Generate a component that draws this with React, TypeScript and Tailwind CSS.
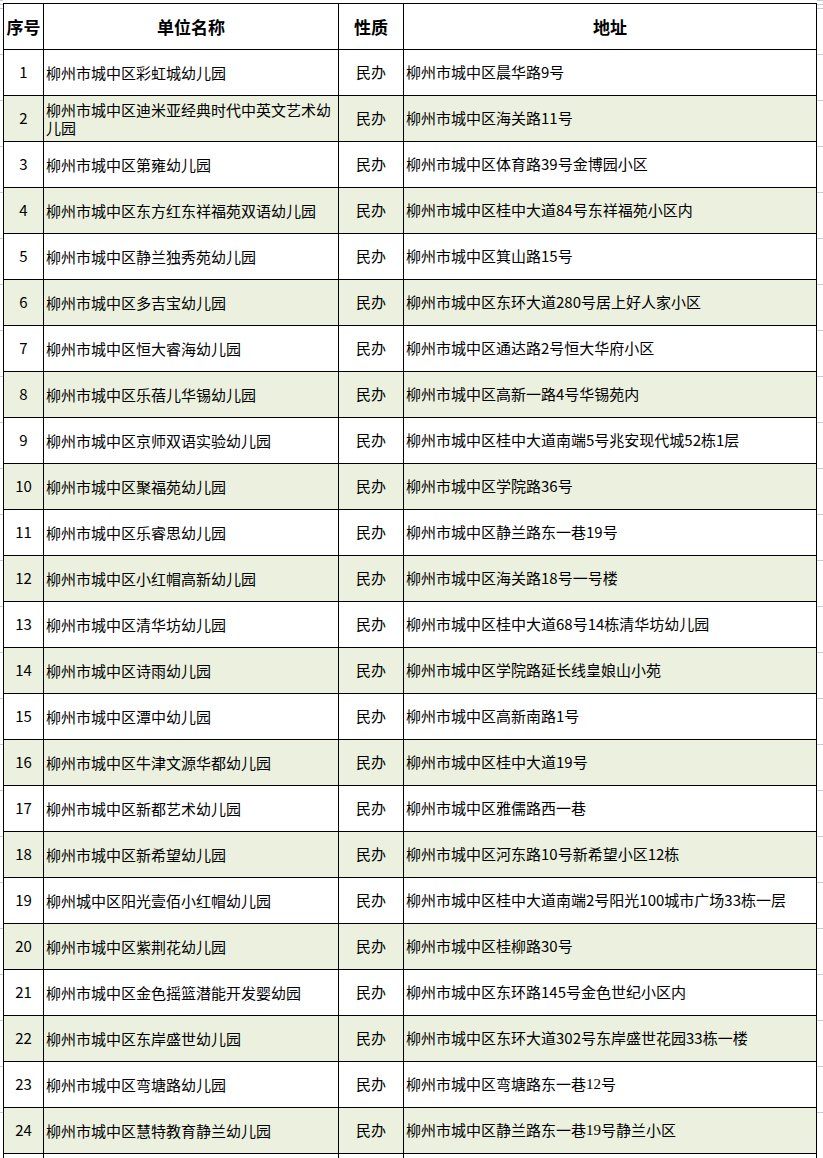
import React from "react";

type Row = { name: string; addr: React.ReactNode };

const serif = (s: string) => (
  <span style={{ fontFamily: '"Liberation Serif", serif' }} className="text-[15px]">
    {s}
  </span>
);

const rows: Row[] = [
  { name: "柳州市城中区彩虹城幼儿园", addr: "柳州市城中区晨华路9号" },
  { name: "柳州市城中区迪米亚经典时代中英文艺术幼儿园", addr: "柳州市城中区海关路11号" },
  { name: "柳州市城中区第雍幼儿园", addr: "柳州市城中区体育路39号金博园小区" },
  { name: "柳州市城中区东方红东祥福苑双语幼儿园", addr: "柳州市城中区桂中大道84号东祥福苑小区内" },
  { name: "柳州市城中区静兰独秀苑幼儿园", addr: "柳州市城中区箕山路15号" },
  { name: "柳州市城中区多吉宝幼儿园", addr: "柳州市城中区东环大道280号居上好人家小区" },
  { name: "柳州市城中区恒大睿海幼儿园", addr: "柳州市城中区通达路2号恒大华府小区" },
  { name: "柳州市城中区乐蓓儿华锡幼儿园", addr: "柳州市城中区高新一路4号华锡苑内" },
  { name: "柳州市城中区京师双语实验幼儿园", addr: "柳州市城中区桂中大道南端5号兆安现代城52栋1层" },
  { name: "柳州市城中区聚福苑幼儿园", addr: "柳州市城中区学院路36号" },
  { name: "柳州市城中区乐睿思幼儿园", addr: "柳州市城中区静兰路东一巷19号" },
  { name: "柳州市城中区小红帽高新幼儿园", addr: "柳州市城中区海关路18号一号楼" },
  { name: "柳州市城中区清华坊幼儿园", addr: "柳州市城中区桂中大道68号14栋清华坊幼儿园" },
  { name: "柳州市城中区诗雨幼儿园", addr: "柳州市城中区学院路延长线皇娘山小苑" },
  { name: "柳州市城中区潭中幼儿园", addr: "柳州市城中区高新南路1号" },
  { name: "柳州市城中区牛津文源华都幼儿园", addr: "柳州市城中区桂中大道19号" },
  { name: "柳州市城中区新都艺术幼儿园", addr: "柳州市城中区雅儒路西一巷" },
  { name: "柳州市城中区新希望幼儿园", addr: "柳州市城中区河东路10号新希望小区12栋" },
  { name: "柳州城中区阳光壹佰小红帽幼儿园", addr: "柳州市城中区桂中大道南端2号阳光100城市广场33栋一层" },
  { name: "柳州市城中区紫荆花幼儿园", addr: "柳州市城中区桂柳路30号" },
  { name: "柳州市城中区金色摇篮潜能开发婴幼园", addr: "柳州市城中区东环路145号金色世纪小区内" },
  { name: "柳州市城中区东岸盛世幼儿园", addr: "柳州市城中区东环大道302号东岸盛世花园33栋一楼" },
  { name: "柳州市城中区弯塘路幼儿园", addr: <>柳州市城中区弯塘路东一巷{serif("12")}号</> },
  { name: "柳州市城中区慧特教育静兰幼儿园", addr: <>柳州市城中区静兰路东一巷{serif("19")}号静兰小区</> },
];

const cell = "h-[46px] border-r border-b border-black flex items-center";

function Gutter({ w }: { w: string }) {
  return (
    <div className={`${w} flex flex-col shrink-0`}>
      <div className="h-[3px]" />
      <div className="h-[23px] border-t border-[#c6ccd7]" />
      <div className="h-[23px] border-t border-[#c6ccd7]" />
      {Array.from({ length: 25 }).map((_, i) => (
        <div key={i} className="h-[46px] border-t border-[#c6ccd7] shrink-0" />
      ))}
    </div>
  );
}

export default function App() {
  return (
    <div
      className="w-[823px] h-[1158px] overflow-hidden bg-white flex text-black"
      style={{ fontFamily: '"Noto Sans CJK SC", "Noto Sans", sans-serif' }}
    >
      <Gutter w="w-[3px]" />
      <div className="mt-[3px] shrink-0">
        <div className="grid grid-cols-[41px_295px_65px_413px] border-t border-black">
          {/* header */}
          <div className={`${cell} border-l justify-center font-bold text-[17px]`}>序号</div>
          <div className={`${cell} justify-center font-bold text-[17px]`}>单位名称</div>
          <div className={`${cell} justify-center font-bold text-[17px]`}>性质</div>
          <div className={`${cell} justify-center font-bold text-[17px]`}>地址</div>
          {rows.map((r, i) => {
            const bg = i % 2 === 1 ? "bg-[#ebf1de]" : "bg-white";
            return (
              <React.Fragment key={i}>
                <div className={`${cell} ${bg} border-l justify-center text-[15px]`}>{i + 1}</div>
                <div className={`${cell} ${bg} pl-[2px] pr-[4px] text-[15px] leading-[18px]`}>
                  <span>{r.name}</span>
                </div>
                <div className={`${cell} ${bg} justify-center text-[15px]`}>民办</div>
                <div className={`${cell} ${bg} pl-[2px] text-[15px] whitespace-nowrap`}>{r.addr}</div>
              </React.Fragment>
            );
          })}
          <div className={`${cell} border-l`} />
          <div className={cell} />
          <div className={cell} />
          <div className={cell} />
        </div>
      </div>
      <Gutter w="flex-1" />
    </div>
  );
}
